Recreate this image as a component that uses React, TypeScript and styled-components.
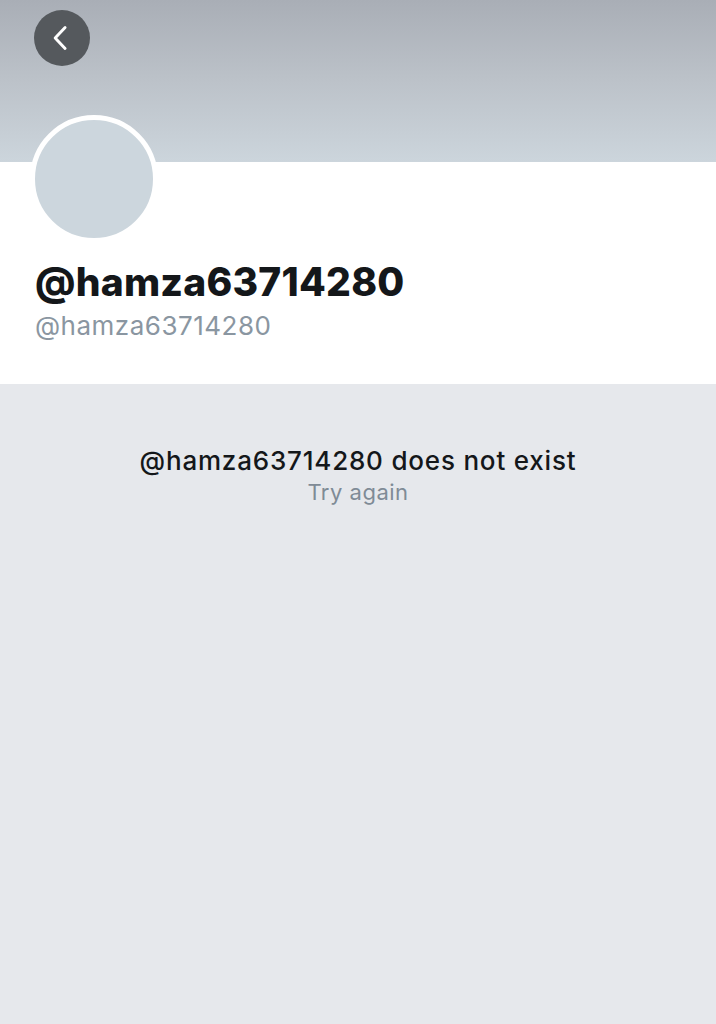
import React from 'react';
import styled, { createGlobalStyle } from 'styled-components';

const GlobalStyle = createGlobalStyle`
  html, body {
    margin: 0;
    padding: 0;
    background: #e6e8ec;
    font-family: Inter, "Noto Sans", "Liberation Sans", sans-serif;
  }
`;

export default function App() {
  const handle = '@hamza63714280';
  return (
    <Page>
      <GlobalStyle />
      <Banner>
        <BackButton aria-label="Back">
          <svg width="28" height="28" viewBox="0 0 24 24" fill="none">
            <path d="M15.5 3 L7 12 L15.5 21" stroke="#fff" strokeWidth="2.5" strokeLinecap="round" strokeLinejoin="round" />
          </svg>
        </BackButton>
      </Banner>
      <ProfileCard>
        <Avatar />
        <DisplayName>{handle}</DisplayName>
        <Handle>{handle}</Handle>
      </ProfileCard>
      <EmptyState>
        <Message>{handle} does not exist</Message>
        <RetryLink>Try again</RetryLink>
      </EmptyState>
    </Page>
  );
}

const Page = styled.div`
  min-height: 1024px;
  display: flex;
  flex-direction: column;
  background: #e6e8ec;
`;

const Banner = styled.div`
  height: 162px;
  box-sizing: border-box;
  padding: 10px 0 0 34px;
  background: linear-gradient(180deg, #a9aeb6 0%, #bcc2c9 50%, #ccd5dc 100%);
`;

const BackButton = styled.button`
  width: 56px;
  height: 56px;
  border: none;
  border-radius: 50%;
  background: #55595d;
  display: flex;
  align-items: center;
  justify-content: center;
  padding: 0 3px 0 0;
  cursor: pointer;
`;

const ProfileCard = styled.div`
  background: #fff;
  height: 222px;
  padding: 0 35px;
  display: flex;
  flex-direction: column;
  align-items: flex-start;
`;

const Avatar = styled.div`
  width: 118px;
  height: 118px;
  border-radius: 50%;
  background: #ccd6dd;
  border: 5px solid #fff;
  margin: -47px 0 0 -5px;
`;

const DisplayName = styled.div`
  margin-top: 16px;
  font-size: 39px;
  font-weight: 800;
  line-height: 46px;
  color: #14171a;
  letter-spacing: 0.25px;
`;

const Handle = styled.div`
  margin-top: 6px;
  font-size: 26px;
  line-height: 30px;
  color: #8a96a1;
  letter-spacing: 0.5px;
`;

const EmptyState = styled.div`
  display: flex;
  flex-direction: column;
  align-items: center;
  padding-top: 61px;
`;

const Message = styled.div`
  font-size: 26px;
  font-weight: 500;
  line-height: 32px;
  color: #14171a;
  letter-spacing: 0.8px;
`;

const RetryLink = styled.div`
  margin-top: 1px;
  font-size: 22px;
  line-height: 28px;
  color: #7f8b96;
  letter-spacing: 0.5px;
`;
